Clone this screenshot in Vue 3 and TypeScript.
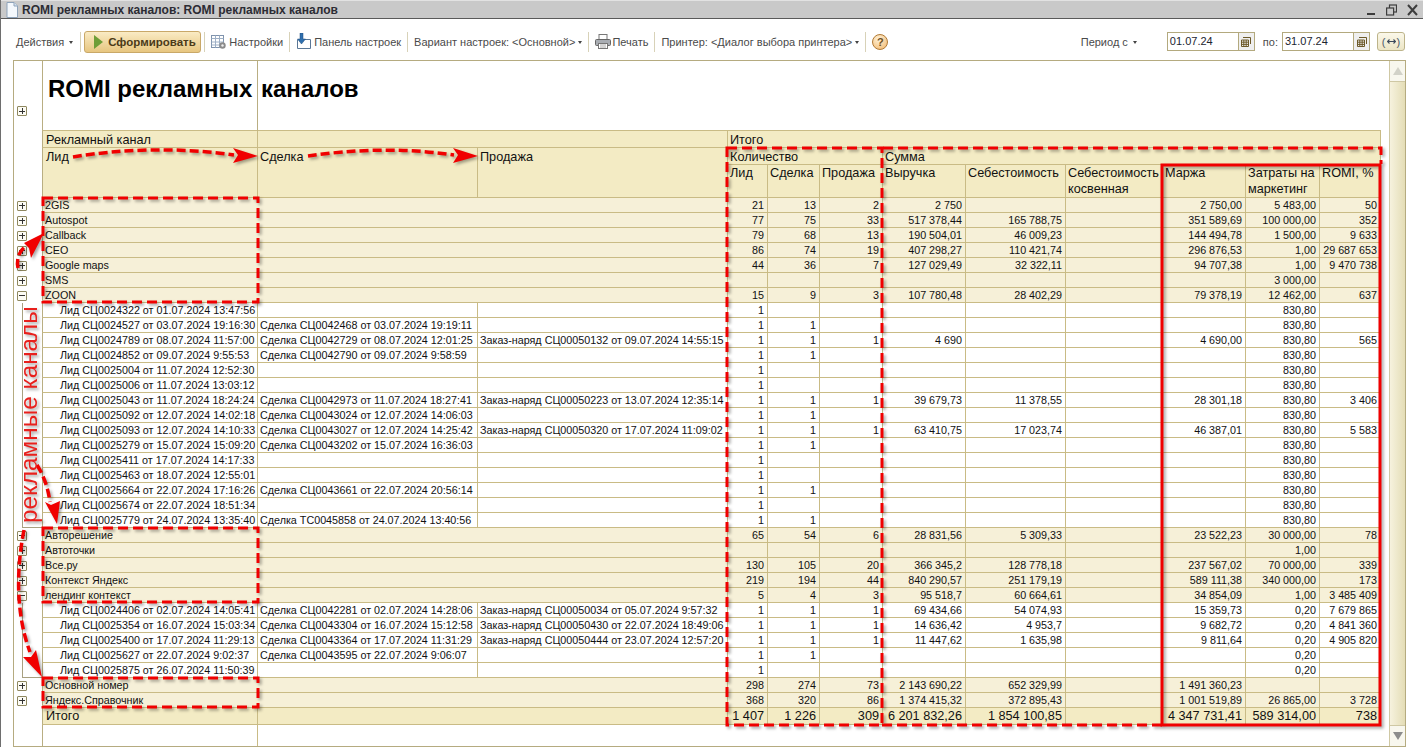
<script setup lang="ts">
type Row = { kind: 'group' | 'lead'; open?: boolean; last?: boolean; a: string; b?: string; c?: string; v: string[] };

const group = (a: string, v: string[], open = false): Row => ({ kind: 'group', a, v, open });
const lead = (a: string, b: string, c: string, v: string[], last = false): Row => ({ kind: 'lead', a, b, c, v, last });
const cols = (lid = '', sd = '', pr = '', vy = '', se = '', ma = '', za = '', ro = '') => [lid, sd, pr, vy, se, '', ma, za, ro];

const rows: Row[] = [
  group('2GIS', cols('21', '13', '2', '2 750', '', '2 750,00', '5 483,00', '50')),
  group('Autospot', cols('77', '75', '33', '517 378,44', '165 788,75', '351 589,69', '100 000,00', '352')),
  group('Callback', cols('79', '68', '13', '190 504,01', '46 009,23', '144 494,78', '1 500,00', '9 633')),
  group('CEO', cols('86', '74', '19', '407 298,27', '110 421,74', '296 876,53', '1,00', '29 687 653')),
  group('Google maps', cols('44', '36', '7', '127 029,49', '32 322,11', '94 707,38', '1,00', '9 470 738')),
  group('SMS', cols('', '', '', '', '', '', '3 000,00', '')),
  group('ZOON', cols('15', '9', '3', '107 780,48', '28 402,29', '79 378,19', '12 462,00', '637'), true),
  lead('Лид СЦ0024322 от 01.07.2024 13:47:56', '', '', cols('1', '', '', '', '', '', '830,80')),
  lead('Лид СЦ0024527 от 03.07.2024 19:16:30', 'Сделка СЦ0042468 от 03.07.2024 19:19:11', '', cols('1', '1', '', '', '', '', '830,80')),
  lead('Лид СЦ0024789 от 08.07.2024 11:57:00', 'Сделка СЦ0042729 от 08.07.2024 12:01:25', 'Заказ-наряд СЦ00050132 от 09.07.2024 14:55:15', cols('1', '1', '1', '4 690', '', '4 690,00', '830,80', '565')),
  lead('Лид СЦ0024852 от 09.07.2024 9:55:53', 'Сделка СЦ0042790 от 09.07.2024 9:58:59', '', cols('1', '1', '', '', '', '', '830,80')),
  lead('Лид СЦ0025004 от 11.07.2024 12:52:30', '', '', cols('1', '', '', '', '', '', '830,80')),
  lead('Лид СЦ0025006 от 11.07.2024 13:03:12', '', '', cols('1', '', '', '', '', '', '830,80')),
  lead('Лид СЦ0025043 от 11.07.2024 18:24:24', 'Сделка СЦ0042973 от 11.07.2024 18:27:41', 'Заказ-наряд СЦ00050223 от 13.07.2024 12:35:14', cols('1', '1', '1', '39 679,73', '11 378,55', '28 301,18', '830,80', '3 406')),
  lead('Лид СЦ0025092 от 12.07.2024 14:02:18', 'Сделка СЦ0043024 от 12.07.2024 14:06:03', '', cols('1', '1', '', '', '', '', '830,80')),
  lead('Лид СЦ0025093 от 12.07.2024 14:10:33', 'Сделка СЦ0043027 от 12.07.2024 14:25:42', 'Заказ-наряд СЦ00050320 от 17.07.2024 11:09:02', cols('1', '1', '1', '63 410,75', '17 023,74', '46 387,01', '830,80', '5 583')),
  lead('Лид СЦ0025279 от 15.07.2024 15:09:20', 'Сделка СЦ0043202 от 15.07.2024 16:36:03', '', cols('1', '1', '', '', '', '', '830,80')),
  lead('Лид СЦ0025411 от 17.07.2024 14:17:33', '', '', cols('1', '', '', '', '', '', '830,80')),
  lead('Лид СЦ0025463 от 18.07.2024 12:55:01', '', '', cols('1', '', '', '', '', '', '830,80')),
  lead('Лид СЦ0025664 от 22.07.2024 17:16:26', 'Сделка СЦ0043661 от 22.07.2024 20:56:14', '', cols('1', '1', '', '', '', '', '830,80')),
  lead('Лид СЦ0025674 от 22.07.2024 18:51:34', '', '', cols('1', '', '', '', '', '', '830,80')),
  lead('Лид СЦ0025779 от 24.07.2024 13:35:40', 'Сделка ТС0045858 от 24.07.2024 13:40:56', '', cols('1', '1', '', '', '', '', '830,80'), true),
  group('Авторешение', cols('65', '54', '6', '28 831,56', '5 309,33', '23 522,23', '30 000,00', '78')),
  group('Автоточки', cols('', '', '', '', '', '', '1,00', '')),
  group('Все.ру', cols('130', '105', '20', '366 345,2', '128 778,18', '237 567,02', '70 000,00', '339')),
  group('Контекст Яндекс', cols('219', '194', '44', '840 290,57', '251 179,19', '589 111,38', '340 000,00', '173')),
  group('лендинг контекст', cols('5', '4', '3', '95 518,7', '60 664,61', '34 854,09', '1,00', '3 485 409'), true),
  lead('Лид СЦ0024406 от 02.07.2024 14:05:41', 'Сделка СЦ0042281 от 02.07.2024 14:28:06', 'Заказ-наряд СЦ00050034 от 05.07.2024 9:57:32', cols('1', '1', '1', '69 434,66', '54 074,93', '15 359,73', '0,20', '7 679 865')),
  lead('Лид СЦ0025354 от 16.07.2024 15:03:34', 'Сделка СЦ0043304 от 16.07.2024 15:12:58', 'Заказ-наряд СЦ00050430 от 22.07.2024 18:49:06', cols('1', '1', '1', '14 636,42', '4 953,7', '9 682,72', '0,20', '4 841 360')),
  lead('Лид СЦ0025400 от 17.07.2024 11:29:13', 'Сделка СЦ0043364 от 17.07.2024 11:31:29', 'Заказ-наряд СЦ00050444 от 23.07.2024 12:57:20', cols('1', '1', '1', '11 447,62', '1 635,98', '9 811,64', '0,20', '4 905 820')),
  lead('Лид СЦ0025627 от 22.07.2024 9:02:37', 'Сделка СЦ0043595 от 22.07.2024 9:06:07', '', cols('1', '1', '', '', '', '', '0,20')),
  lead('Лид СЦ0025875 от 26.07.2024 11:50:39', '', '', cols('1', '', '', '', '', '', '0,20'), true),
  group('Основной номер', cols('298', '274', '73', '2 143 690,22', '652 329,99', '1 491 360,23')),
  group('Яндекс.Справочник', cols('368', '320', '86', '1 374 415,32', '372 895,43', '1 001 519,89', '26 865,00', '3 728')),
];

const total = ['1 407', '1 226', '309', '6 201 832,26', '1 854 100,85', '', '4 347 731,41', '589 314,00', '738'];
const widths = [28, 216, 220, 250, 40, 52, 63, 83, 100, 97, 83, 74, 61];

const dashBoxes = [
  'M43 198H258V302H43Z',
  'M43 528H258V602H43Z',
  'M43 678H258V707H43Z',
  'M727 148H882V725H727Z',
  'M883 148H1381V164M882 725H1162',
];
const dashCurves = [
  'M73 157C120 149 180 147 234 155',
  'M308 156C350 150 400 147 454 155',
  'M18 268C16 258 20 250 26 246',
  'M37 465C44 476 48 488 50 502',
  'M24 530C16 570 16 615 30 652',
];
const heads = [
  '258,156 233,148 238,155 233,163',
  '478,156 453,148 458,155 453,163',
  '44,233 24,243 29,248 31,258',
  '57,524 45,502 51,505 60,501',
  '42,677 23,657 31,657 36,650',
];
</script>

<template>
  <div class="window">
    <header class="titlebar">
      <svg class="doc" width="12" height="16" viewBox="0 0 12 16">
        <path d="M1 .5H8L11.5 4V15.5H1Z" fill="#f4f8fc" stroke="#8ea3ba" />
        <path d="M8 .5V4H11.5" fill="#d5e2ef" stroke="#8ea3ba" />
      </svg>
      <span class="title">ROMI рекламных каналов: ROMI рекламных каналов</span>
      <div class="winbtns">
        <svg width="9" height="12" viewBox="0 0 9 12"><rect x="0" y="9" width="8" height="2" fill="#3d3d3d" /></svg>
        <svg width="11" height="12" viewBox="0 0 11 12" fill="none" stroke="#3d3d3d" stroke-width="1.2"><rect x="3.5" y="1" width="7" height="7" /><rect x=".6" y="4" width="7" height="7" fill="#c9c9c9" /></svg>
        <svg width="11" height="12" viewBox="0 0 11 12" fill="none" stroke="#3d3d3d" stroke-width="2"><path d="M1 1L10 11M10 1L1 11" /></svg>
      </div>
    </header>

    <div class="toolbar">
      <span class="tool act">Действия<i class="caret caret-wide"></i></span>
      <i class="sep"></i>
      <button class="primary" type="button">
        <svg width="9" height="14" viewBox="0 0 9 14"><path d="M0 0L9 7L0 14Z" fill="#6f9e37" /></svg>
        Сформировать
      </button>
      <i class="sep"></i>
      <span class="tool">
        <svg width="16" height="16" viewBox="0 0 16 16">
          <rect x=".5" y="1.5" width="12" height="12" fill="#fff" stroke="#7f93ad" />
          <path d="M.5 4.5H12.5M4.5 1.5V13.5M8.5 1.5V13.5M.5 8H12.5M.5 11H12.5" stroke="#9eb0c6" fill="none" />
          <circle cx="11.5" cy="11.5" r="3.2" fill="#8b8b8b" /><circle cx="11.5" cy="11.5" r="1.2" fill="#eee" />
        </svg>
        Настройки
      </span>
      <i class="sep"></i>
      <span class="tool">
        <svg width="16" height="17" viewBox="0 0 16 17">
          <path d="M3.5 6.500H14.500V15.500H1.500V6.500" fill="#fff" stroke="#5a7796" />
          <path d="M4 0H7V6H9.500L5.500 11L1.500 6H4Z" fill="#2f6fae" stroke="#234f7d" stroke-width=".5" />
        </svg>
        Панель настроек
      </span>
      <i class="sep"></i>
      <span class="tool">Вариант настроек: &lt;Основной&gt;<i class="caret"></i></span>
      <i class="sep"></i>
      <span class="tool print">
        <svg width="16" height="15" viewBox="0 0 16 15">
          <rect x="4" y=".5" width="8" height="5" fill="#fff" stroke="#777" />
          <rect x=".5" y="5.500" width="15" height="6" rx="1" fill="#a9adb3" stroke="#666" />
          <rect x="3.500" y="9.500" width="9" height="5" fill="#fff" stroke="#777" />
          <path d="M5 11H11M5 13H11" stroke="#aaa" />
        </svg>
        Печать
      </span>
      <i class="sep"></i>
      <span class="tool">Принтер: &lt;Диалог выбора принтера&gt;<i class="caret"></i></span>
      <i class="sep"></i>
      <span class="help">?</span>

      <span class="tool period">Период с<i class="caret caret-wide"></i></span>
      <div class="date">
        <span class="date-val">01.07.24</span>
        <span class="cal">
          <svg width="10" height="10" viewBox="0 0 10 10"><path d="M2 .5H9.500V7M.5 3H7.500V9.500H.5ZM.5 5.200H7.500M.5 7.400H7.500M2.800 3V9.500M5.200 3V9.500" fill="none" stroke="#6d5a2a" /></svg>
        </span>
      </div>
      <span class="tool po">по:</span>
      <div class="date">
        <span class="date-val">31.07.24</span>
        <span class="cal">
          <svg width="10" height="10" viewBox="0 0 10 10"><path d="M2 .5H9.500V7M.5 3H7.500V9.500H.5ZM.5 5.200H7.500M.5 7.400H7.500M2.800 3V9.500M5.200 3V9.500" fill="none" stroke="#6d5a2a" /></svg>
        </span>
      </div>
      <button class="swap" type="button">
        (<svg width="9" height="7" viewBox="0 0 9 7"><path d="M.5 3.500H8.500M2.500 1.500L.5 3.500L2.500 5.500M6.500 1.500L8.500 3.500L6.500 5.500" fill="none" stroke="#3c4a5c" stroke-width="1.1" /></svg>)
      </button>
    </div>

    <section class="frame">
      <div class="sheet">
        <table class="report">
          <colgroup>
            <col v-for="(w, i) in widths" :key="i" :style="{ width: w + 'px' }" />
          </colgroup>
          <tbody>
            <tr class="r-title">
              <td class="gut gut-title"><span class="pm plus"></span></td>
              <td class="col-a title-a">ROMI рекламных</td>
              <td class="title-b" colspan="11">каналов</td>
            </tr>
            <tr class="r-head">
              <td class="gut"></td>
              <td class="col-a h h-a">Рекламный канал</td>
              <td class="h" colspan="2"></td>
              <td class="h" colspan="9">Итого</td>
            </tr>
            <tr class="r-head">
              <td class="gut" rowspan="2"></td>
              <td class="col-a h h-a" rowspan="2">Лид</td>
              <td class="h" rowspan="2">Сделка</td>
              <td class="h" rowspan="2">Продажа</td>
              <td class="h" colspan="3">Количество</td>
              <td class="h" colspan="6">Сумма</td>
            </tr>
            <tr class="r-head2">
              <td class="h">Лид</td>
              <td class="h">Сделка</td>
              <td class="h">Продажа</td>
              <td class="h">Выручка</td>
              <td class="h">Себестоимость</td>
              <td class="h">Себестоимость косвенная</td>
              <td class="h">Маржа</td>
              <td class="h">Затраты на маркетинг</td>
              <td class="h">ROMI, %</td>
            </tr>

            <tr v-for="(row, i) in rows" :key="i" class="r-data" :class="row.kind">
              <template v-if="row.kind === 'group'">
                <td class="gut"><span class="pm" :class="row.open ? 'minus' : 'plus'"></span></td>
                <td class="col-a txt" colspan="3">{{ row.a }}</td>
              </template>
              <template v-else>
                <td class="gut tree" :class="{ 'tree-end': row.last }"></td>
                <td class="col-a txt indent">{{ row.a }}</td>
                <td class="txt">{{ row.b }}</td>
                <td class="txt">{{ row.c }}</td>
              </template>
              <td v-for="(n, j) in row.v" :key="j" class="num">{{ n }}</td>
            </tr>

            <tr class="r-total">
              <td class="gut"></td>
              <td class="col-a big big-a">Итого</td>
              <td class="big" colspan="2"></td>
              <td v-for="(n, j) in total" :key="j" class="big num">{{ n }}</td>
            </tr>
            <tr class="r-rest">
              <td class="gut"></td>
              <td class="col-a blank"></td>
              <td class="blank-b" colspan="11"></td>
            </tr>
          </tbody>
        </table>
      </div>
      <aside class="scroll">
        <span class="sc-btn sc-up"></span>
        <span class="sc-track"></span>
        <span class="sc-btn sc-down"></span>
      </aside>
    </section>

    <svg class="marks" width="1423" height="747" viewBox="0 0 1423 747">
      <g class="marks-g">
        <g fill="none" stroke="#f00000" stroke-width="3">
          <path d="M1162 165H1380V725H1162Z" />
          <path v-for="d in dashBoxes" :key="d" :d="d" stroke-dasharray="10 5" />
          <path v-for="d in dashCurves" :key="d" :d="d" stroke-dasharray="9 4" stroke-width="3.5" />
        </g>
        <polygon v-for="p in heads" :key="p" :points="p" fill="#f00000" />
        <text class="mark-text" transform="translate(37 523) rotate(-90)">рекламные каналы</text>
      </g>
    </svg>
  </div>
</template>

<style>
html, body { margin: 0; background: #fff; }
</style>

<style scoped>
.window {
  position: relative;
  display: flex;
  flex-direction: column;
  width: 1423px;
  height: 747px;
  overflow: hidden;
  box-sizing: border-box;
  border-left: 1px solid #6e6e6e;
  background: #fff;
  font-family: "Liberation Sans", Arial, sans-serif;
  color: #111;
}
.titlebar {
  display: flex;
  align-items: center;
  flex: 0 0 19px;
  box-sizing: border-box;
  padding: 0 5px;
  background: #c9c9c9;
  border-top: 1px solid #e2e2e2;
  border-bottom: 1px solid #5a5a5a;
}
.doc { margin-right: 4px; }
.title { font-size: 12px; font-weight: 700; color: #2c2c34; }
.winbtns { margin-left: auto; display: flex; align-items: center; gap: 10px; }

.toolbar {
  display: flex;
  align-items: center;
  flex: 0 0 41px;
  box-sizing: border-box;
  padding: 4px 18px 0 15px;
  font-size: 11px;
  color: #4a4a4a;
}
.tool { display: inline-flex; align-items: center; gap: 2px; white-space: nowrap; }
.act { margin-right: 1px; }
.print { gap: 1px; }
.caret {
  display: inline-block;
  width: 0;
  height: 0;
  margin-left: 1px;
  margin-top: 2px;
  border-left: 2.5px solid transparent;
  border-right: 2.5px solid transparent;
  border-top: 3px solid #444;
}
.caret-wide { margin-left: 3px; }
.sep {
  display: inline-block;
  width: 1px;
  height: 20px;
  margin: 0 6px;
  background: #d8d2b8;
}
.primary {
  display: inline-flex;
  align-items: center;
  gap: 5px;
  width: 117px;
  height: 22px;
  padding: 0 0 0 9px;
  margin: 0 -3px;
  box-sizing: border-box;
  font: 700 11.5px "Liberation Sans", Arial, sans-serif;
  color: #4b3a18;
  background: linear-gradient(#faebc4, #e7c680);
  border: 1px solid #c9a868;
  border-radius: 3px;
}
.help {
  width: 16px;
  height: 16px;
  display: inline-flex;
  align-items: center;
  justify-content: center;
  border-radius: 50%;
  border: 1px solid #b27a34;
  box-sizing: border-box;
  background: radial-gradient(circle at 40% 30%, #fff2d8, #f0b56a);
  color: #70501e;
  font-size: 11px;
  font-weight: 700;
}
.period { margin-left: auto; margin-right: 30px; }
.po { margin: 0 4px 0 8px; }
.date {
  display: flex;
  width: 88px;
  height: 19px;
  box-sizing: border-box;
  border: 1px solid #b3a97e;
  background: #fff;
}
.date-val { flex: 1; padding-left: 2px; font-size: 11px; line-height: 17px; color: #1c2530; }
.cal {
  width: 15px;
  display: flex;
  align-items: center;
  justify-content: center;
  background: #efefef;
  border-left: 1px solid #b3a97e;
}
.swap {
  display: inline-flex;
  align-items: center;
  justify-content: center;
  gap: 1px;
  width: 28px;
  height: 19px;
  margin-left: 7px;
  padding: 0;
  box-sizing: border-box;
  font: 11px "Liberation Sans", Arial, sans-serif;
  color: #4c5a6b;
  background: linear-gradient(#fbf8ea, #ece5c5);
  border: 1px solid #bdb48a;
  border-radius: 3px;
}

.frame {
  display: flex;
  width: 1393px;
  height: 687px;
  margin-left: 12px;
  box-sizing: border-box;
  border: 1px solid #b5ab80;
}
.sheet { flex: 1; min-width: 0; overflow: hidden; }
.report {
  table-layout: fixed;
  width: 1367px;
  border-collapse: separate;
  border-spacing: 0;
  font-size: 10.75px;
}
.report td {
  box-sizing: border-box;
  padding: 0;
  white-space: nowrap;
  overflow: hidden;
  border-right: 1px solid #c9bb85;
  border-bottom: 1px solid #c9bb85;
  line-height: 14px;
  vertical-align: top;
}
.report td.gut { border: 0; overflow: visible; position: relative; vertical-align: middle; }
.report td.col-a { border-left: 1px solid #b9ae82; }
.r-title { height: 70px; }
.report td.gut-title { vertical-align: bottom; padding: 0 0 15px 0; }
.report td.title-a, .report td.title-b {
  font-size: 24px;
  font-weight: 700;
  line-height: 26px;
  color: #000;
  overflow: visible;
  padding-top: 15px;
}
.report td.title-a { padding-left: 5px; border-right-color: #b9ae82; }
.report td.title-b { padding-left: 3px; border-right: 0; }
.r-head { height: 17px; }
.r-head2 { height: 33px; }
.report td.h {
  background: #f3ebc4;
  padding: 2px 2px 0 2px;
  font-size: 12.7px;
  white-space: normal;
  line-height: 14px;
}
.r-head2 td.h { padding-top: 0; line-height: 16px; }
.report td.h-a { padding-left: 3px; }
.r-data { height: 15px; }
.group td:not(.gut) { background: #f6f0d8; }
.report td.txt { padding-left: 2px; }
.report td.indent { padding-left: 17px; }
.report td.num { padding-right: 3px; text-align: right; }
.r-total { height: 17px; }
.report td.big {
  background: #f3ebc4;
  font-size: 12.7px;
  padding-top: 1px;
  line-height: 15px;
}
.report td.big-a { padding-left: 3px; }
.r-rest { height: 21px; }
.report td.blank { border-bottom: 0; }
.report td.blank-b { border: 0; }

.pm {
  display: block;
  width: 10px;
  height: 10px;
  margin-left: 3px;
  box-sizing: border-box;
  position: relative;
  border: 1px solid #8f8860;
  border-radius: 1px;
  background: #fdfcf4;
}
.plus::before, .minus::before {
  content: "";
  position: absolute;
  left: 1px;
  right: 1px;
  top: 3.5px;
  height: 1px;
  background: #333;
}
.plus::after {
  content: "";
  position: absolute;
  top: 1px;
  bottom: 1px;
  left: 3.5px;
  width: 1px;
  background: #333;
}
.tree { background: linear-gradient(#a8a080, #a8a080) no-repeat 8px 0 / 1px 100%; }
.tree-end {
  background:
    linear-gradient(#a8a080, #a8a080) no-repeat 8px 0 / 1px 100%,
    linear-gradient(#a8a080, #a8a080) no-repeat 8px 100% / 20px 1px;
}

.scroll { flex: 0 0 16px; display: flex; flex-direction: column; margin-left: auto; border-left: 1px solid #cfc8a4; box-sizing: border-box; }
.sc-track { flex: 1; background: linear-gradient(90deg, #f6f2de, #e4ddb6); }
.sc-btn { flex: 0 0 20px; display: flex; align-items: center; justify-content: center; background: #f8f7ee; }
.sc-up { border-bottom: 1px solid #cfc8a4; }
.sc-down { border-top: 1px solid #cfc8a4; }
.sc-up::before, .sc-down::before { content: ""; width: 0; height: 0; border: 5px solid transparent; }
.sc-up::before { border-bottom: 8px solid #d2d2c8; border-top: 0; }
.sc-down::before { border-top: 8px solid #8c8c8c; border-bottom: 0; }

.marks { position: absolute; left: -1px; top: 0; pointer-events: none; }
.marks-g { filter: drop-shadow(2px 2px 1.5px rgba(0, 0, 0, 0.35)); }
.mark-text { font-size: 24.3px; fill: #e8201c; font-family: "Liberation Sans", Arial, sans-serif; }
</style>
